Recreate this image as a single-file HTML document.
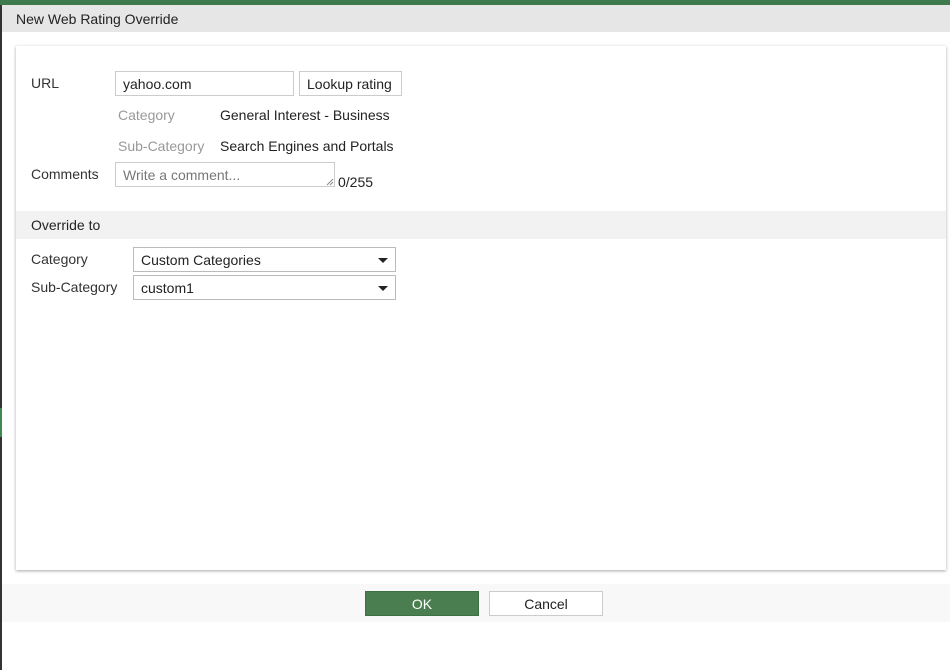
<!DOCTYPE html>
<html><head><meta charset="utf-8"><style>
*{box-sizing:border-box}
body{margin:0;width:950px;height:670px;background:#fff;font-family:"Liberation Sans",sans-serif;font-size:14px;color:#222;position:relative;overflow:hidden}
.topbar{position:absolute;left:0;top:0;width:950px;height:5px;background:#3f7a4e}
.leftbar{position:absolute;left:0;top:5px;width:2px;height:665px;background:#333}
.leftgreen{position:absolute;left:0;top:408px;width:2px;height:29px;background:#3f8a4e}
.header{position:absolute;left:2px;top:5px;width:948px;height:27px;background:#e6e6e6;padding:6px 0 0 14px;font-size:14px;color:#222}
.card{position:absolute;left:16px;top:46px;width:930px;height:524px;background:#fff;box-shadow:0 1px 3px rgba(0,0,0,.35)}
.abs{position:absolute}
.lbl{color:#333}
.grey{color:#999}
.input{position:absolute;border:1px solid #ccc;background:#fff;height:25px;padding:4px 7px}
.sec{position:absolute;left:0;top:165px;width:930px;height:28px;background:#f2f2f2;padding:6px 15px}
.sel{position:absolute;border:1px solid #bbb;background:#fff;height:25px;padding:4px 7px;width:263px}
.sel:after{content:"";position:absolute;right:7px;top:10px;border-left:5px solid transparent;border-right:5px solid transparent;border-top:5px solid #222}
.footer{position:absolute;left:2px;top:584px;width:948px;height:38px;background:#f8f8f8}
.btn{position:absolute;top:7px;height:25px;width:114px;text-align:center;padding-top:4px;font-size:14px}
</style></head><body>
<div class="topbar"></div>
<div class="leftbar"></div><div class="leftgreen"></div>
<div class="header">New Web Rating Override</div>
<div class="card">
  <div class="abs lbl" style="left:15px;top:29px">URL</div>
  <div class="input" style="left:99px;top:25px;width:179px">yahoo.com</div>
  <div class="input" style="left:283px;top:25px;width:103px;padding-left:7px">Lookup rating</div>
  <div class="abs grey" style="left:102px;top:61px">Category</div>
  <div class="abs" style="left:204px;top:61px">General Interest - Business</div>
  <div class="abs grey" style="left:102px;top:92px">Sub-Category</div>
  <div class="abs" style="left:204px;top:92px">Search Engines and Portals</div>
  <div class="abs lbl" style="left:15px;top:120px">Comments</div>
  <div class="input" style="left:99px;top:116px;width:220px;color:#777">Write a comment...</div>
  <svg class="abs" style="left:310px;top:132px" width="8" height="8"><path d="M1 7L7 1M4 7L7 4" stroke="#888" stroke-width="1"/></svg>
  <div class="abs" style="left:322px;top:128px">0/255</div>
  <div class="sec">Override to</div>
  <div class="abs lbl" style="left:15px;top:205px">Category</div>
  <div class="sel" style="left:117px;top:201px">Custom Categories</div>
  <div class="abs lbl" style="left:15px;top:233px">Sub-Category</div>
  <div class="sel" style="left:117px;top:229px">custom1</div>
</div>
<div class="footer">
  <div class="btn" style="left:363px;background:#4a7d4f;color:#fff;border:1px solid #3f6f44">OK</div>
  <div class="btn" style="left:487px;background:#fff;border:1px solid #ccc;color:#222">Cancel</div>
</div>
</body></html>
